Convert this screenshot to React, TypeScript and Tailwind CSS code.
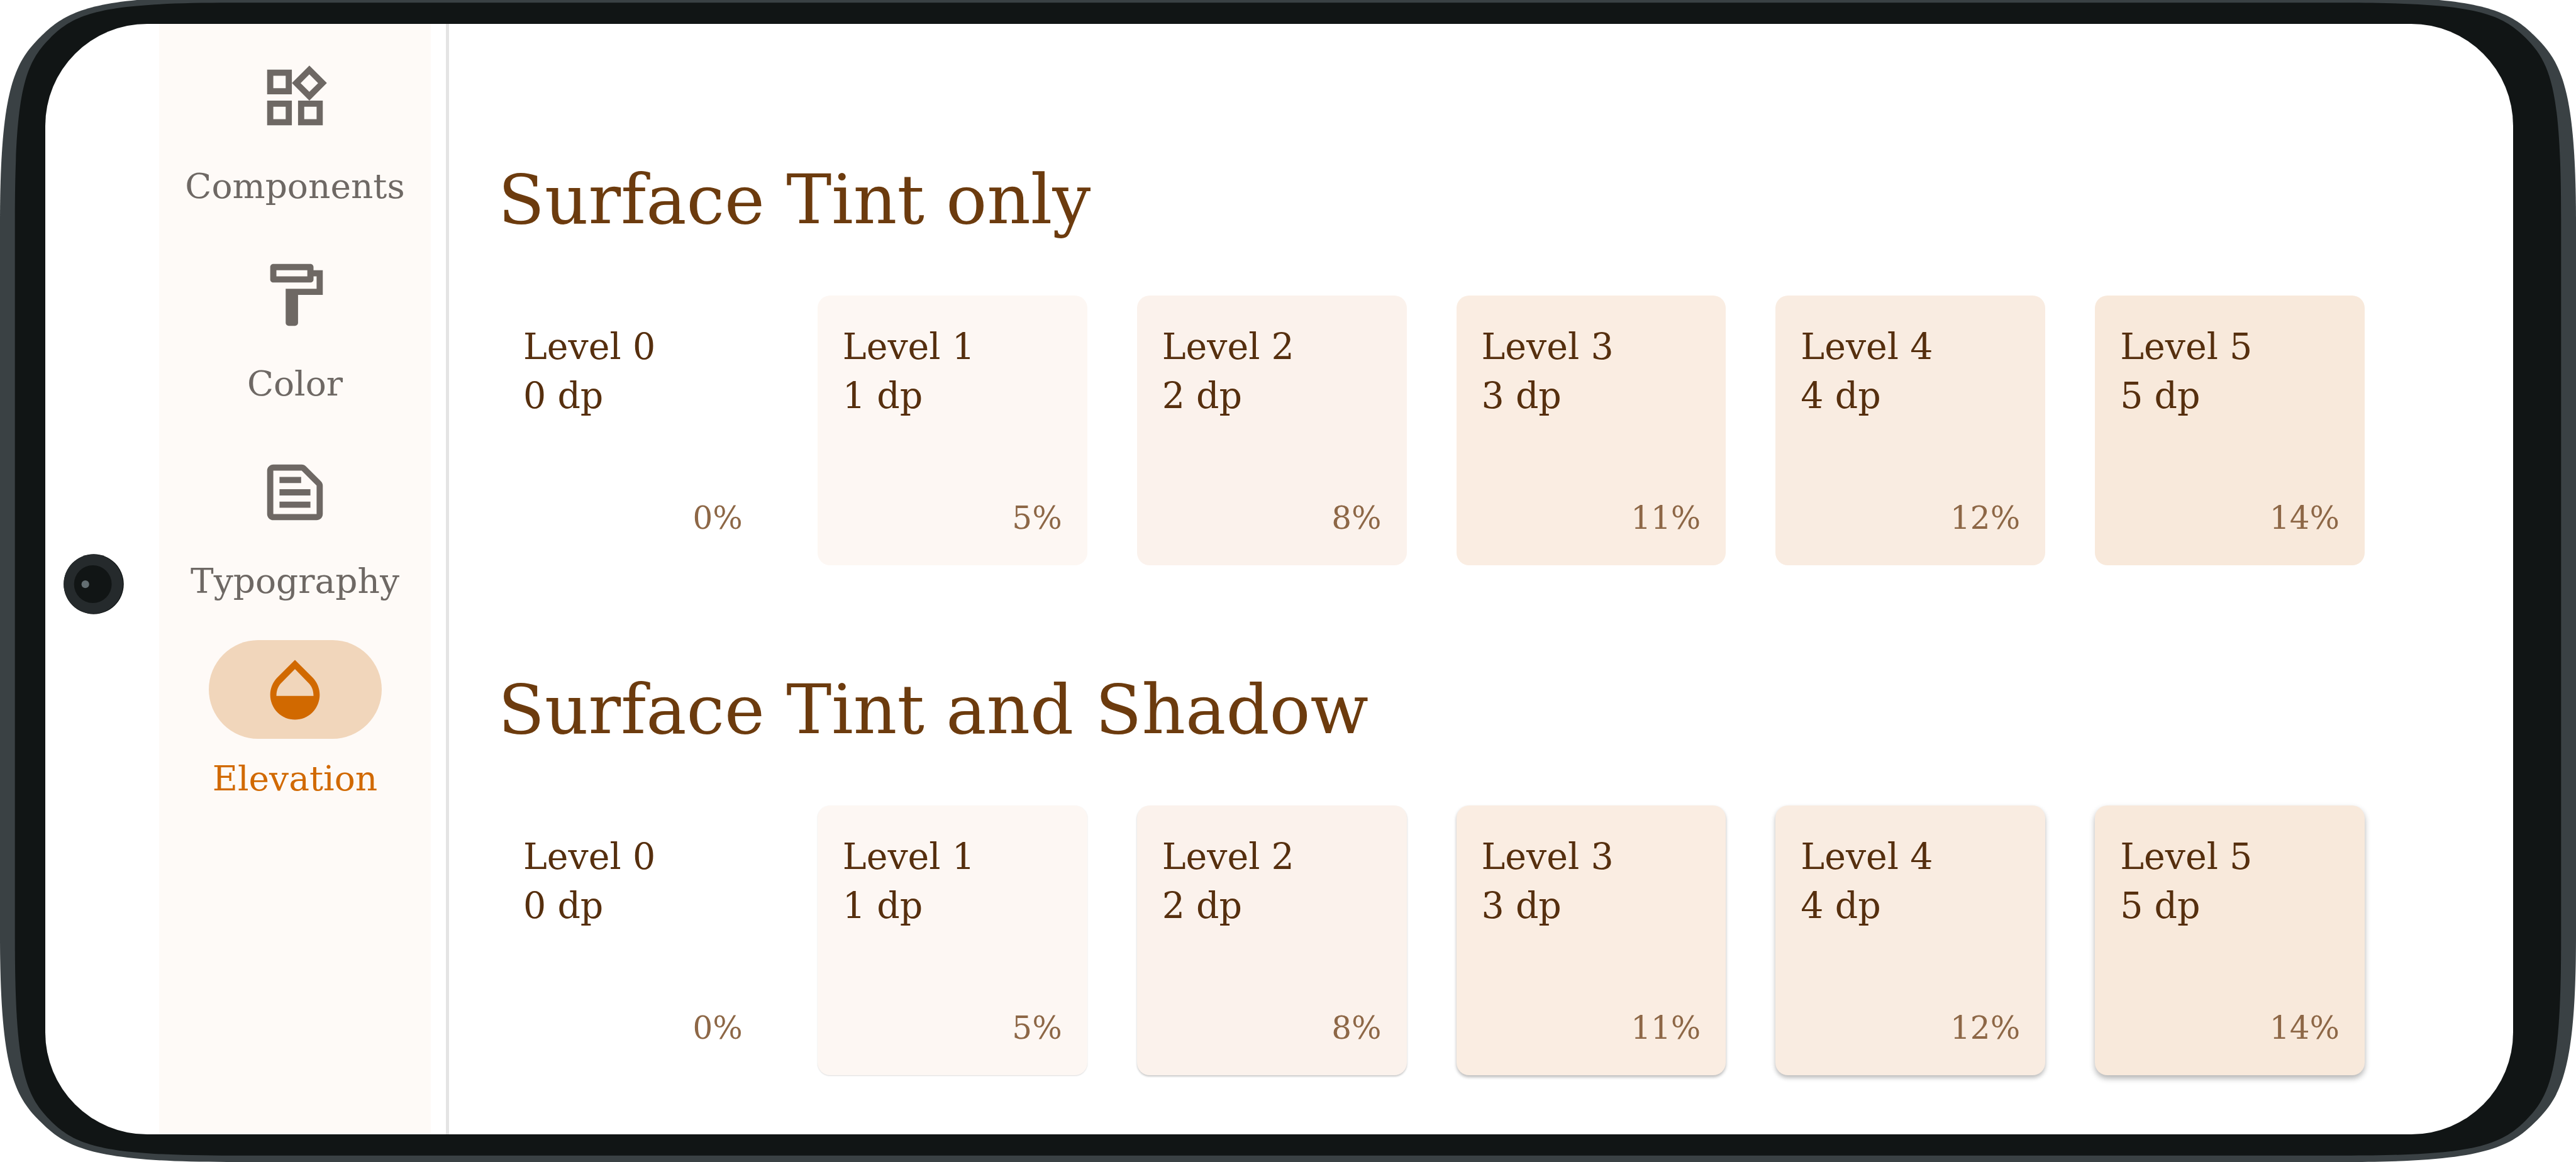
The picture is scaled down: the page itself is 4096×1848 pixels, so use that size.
import React from "react";

type Level = {
  level: number;
  tint: string;
  percent: number;
  shadow: string;
};

const levels: Level[] = [
  { level: 0, tint: "bg-white", percent: 0, shadow: "shadow-none" },
  { level: 1, tint: "bg-[#fdf7f3]", percent: 5, shadow: "shadow-[0_1px_2px_rgba(0,0,0,0.14)]" },
  { level: 2, tint: "bg-[#fbf2ec]", percent: 8, shadow: "shadow-[0_2px_3px_rgba(0,0,0,0.22)]" },
  { level: 3, tint: "bg-[#faede2]", percent: 11, shadow: "shadow-[0_3px_5px_rgba(0,0,0,0.28)]" },
  { level: 4, tint: "bg-[#f9ece1]", percent: 12, shadow: "shadow-[0_4px_7px_rgba(0,0,0,0.28)]" },
  { level: 5, tint: "bg-[#f8e9db]", percent: 14, shadow: "shadow-[0_5px_10px_rgba(0,0,0,0.3)]" },
];

const destinations = [
  {
    name: "Components",
    icon: "M16.66 4.52l2.83 2.83-2.83 2.83-2.83-2.83 2.83-2.83M9 5v4H5V5h4m10 10v4h-4v-4h4M9 15v4H5v-4h4m7.66-13.31L11 7.34 16.66 13l5.66-5.66-5.66-5.65zM11 3H3v8h8V3zm10 10h-8v8h8v-8zm-10 0H3v8h8v-8z",
  },
  {
    name: "Color",
    icon: "M18 4V3c0-.55-.45-1-1-1H5c-.55 0-1 .45-1 1v4c0 .55.45 1 1 1h12c.55 0 1-.45 1-1V6h1v4H9v11c0 .55.45 1 1 1h2c.55 0 1-.45 1-1v-9h8V4h-3zm-2 2H6V4h10v2z",
  },
  {
    name: "Typography",
    icon: "M14.17 5L19 9.83V19H5V5h9.17m0-2H5c-1.1 0-2 .9-2 2v14c0 1.1.9 2 2 2h14c1.1 0 2-.9 2-2V9.83c0-.53-.21-1.04-.59-1.41l-4.83-4.83c-.37-.38-.88-.59-1.41-.59zM7 15h10v2H7v-2zm0-4h10v2H7v-2zm0-4h7v2H7V7z",
  },
  {
    name: "Elevation",
    icon: "M17.66 8L12 2.35 6.34 8C4.78 9.56 4 11.64 4 13.64s.78 4.11 2.34 5.67 3.61 2.35 5.66 2.35 4.1-.79 5.66-2.35S20 15.64 20 13.64 19.22 9.56 17.66 8zM6 14c.01-2 .62-3.27 1.76-4.4L12 5.27l4.24 4.38C17.38 10.77 17.99 12 18 14H6z",
  },
];

function DeviceBody() {
  return (
    <svg
      aria-hidden="true"
      className="absolute inset-0 h-full w-full"
      viewBox="0 0 7596 3427"
      preserveAspectRatio="none"
    >
      <path
        fill="#3a4144"
        d="M0 660C0 260 44 184 119 109S270 -10 670 -10H6926C7326 -10 7402 34 7477 109S7596 260 7596 660V2757C7596 3157 7552 3233 7477 3308S7326 3427 6926 3427H670C270 3427 194 3383 119 3308S0 3157 0 2757Z"
      />
      <path
        fill="#111515"
        d="M44 648C44 268 73 187 148 112S304 8 684 8H6912C7292 8 7373 37 7448 112S7552 268 7552 648V2768C7552 3148 7523 3229 7448 3304S7292 3408 6912 3408H684C304 3408 223 3379 148 3304S44 3148 44 2768Z"
      />
    </svg>
  );
}

function Camera() {
  return (
    <svg aria-hidden="true" className="mt-[16px] h-[96px] w-[96px]" viewBox="0 0 178 178">
      <circle cx="89" cy="89" r="88.5" fill="#080c0c" />
      <circle cx="88" cy="89" r="87.5" fill="#252a2c" />
      <circle cx="86.5" cy="89" r="55.5" fill="#111515" />
      <circle cx="64.3" cy="89.3" r="11.3" fill="#636e72" />
    </svg>
  );
}

function NavRail() {
  return (
    <nav className="w-[432px] shrink-0 bg-[#fefaf7] pt-[38px]">
      <ul>
        {destinations.map(({ name, icon }) => {
          const active = name === "Elevation";
          return (
            <li key={name} className="h-[314px]">
              <a
                href={`#${name.toLowerCase()}`}
                aria-current={active ? "page" : undefined}
                className={
                  active
                    ? "flex flex-col items-center text-[#d16900]"
                    : "flex flex-col items-center text-[#6e6864]"
                }
              >
                <span
                  className={
                    active
                      ? "flex h-[157px] w-[275px] items-center justify-center rounded-full bg-[#f1d6bb]"
                      : "flex h-[157px] w-[275px] items-center justify-center rounded-full"
                  }
                >
                  <svg aria-hidden="true" viewBox="0 0 24 24" className="size-[118px]" fill="currentColor">
                    <path d={icon} />
                  </svg>
                </span>
                <span className="mt-[24px] text-[55px] leading-[78px]">{name}</span>
              </a>
            </li>
          );
        })}
      </ul>
    </nav>
  );
}

function LevelCard({ item, raised }: { item: Level; raised: boolean }) {
  return (
    <li
      className={`flex aspect-square flex-col justify-between rounded-[20px] px-[40px] pt-[42px] pb-[36px] ${item.tint} ${
        raised ? item.shadow : "shadow-none"
      }`}
    >
      <p className="text-[57px] leading-[78px] text-[#562f0e]">
        Level {item.level}
        <br />
        {item.level} dp
      </p>
      <p className="text-right text-[50px] leading-[78px] text-[#8d6746]">{item.percent}%</p>
    </li>
  );
}

function Section({ title, raised = false }: { title: string; raised?: boolean }) {
  return (
    <section>
      <h2 className="text-[108px] leading-[156px] text-[#6c3b0e]">{title}</h2>
      <ul className="mt-[74px] grid grid-cols-6 gap-[79px]">
        {levels.map((item) => (
          <LevelCard key={item.level} item={item} raised={raised} />
        ))}
      </ul>
    </section>
  );
}

export default function App() {
  return (
    <div className="relative flex min-h-screen w-full overflow-hidden bg-white pt-[38px] pr-[100px] pb-[44px] pl-[72px] font-['Roboto_Slab','DejaVu_Serif',serif]">
      <DeviceBody />
      <div className="relative flex flex-1 overflow-hidden rounded-[162px] bg-white">
        <div className="flex w-[181px] shrink-0 items-center pl-[29px]">
          <Camera />
        </div>
        <NavRail />
        <div className="ml-[24px] w-[5px] shrink-0 bg-[#e4e4e4]" />
        <main className="flex flex-1 flex-col gap-[152px] pt-[202px] pr-[236px] pl-[78px]">
          <Section title="Surface Tint only" />
          <Section title="Surface Tint and Shadow" raised />
        </main>
      </div>
    </div>
  );
}
